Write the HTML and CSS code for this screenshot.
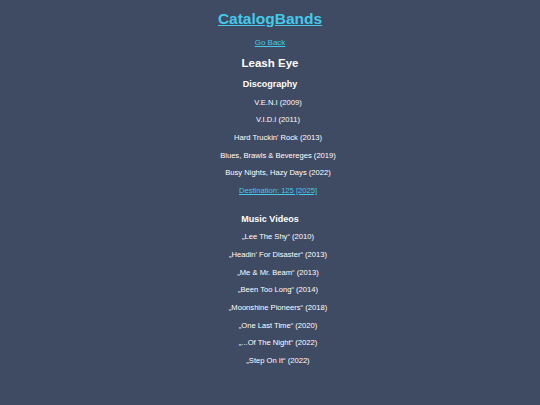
FILE: index.html
```html
<!DOCTYPE html>
<html lang="en">
<head>
  <meta charset="UTF-8">
  <title>CatalogBands - Leash Eye</title>
  <link rel="stylesheet" href="styles.css">
</head>
<body>
  <header class="site-header">
    <h1><a href="#">CatalogBands</a></h1>
    <a class="back-link" href="#">Go Back</a>
  </header>

  <main class="band">
    <h2 class="band-name">Leash Eye</h2>

    <section class="group">
      <h3>Discography</h3>
      <ul class="items">
        <li>V.E.N.I (2009)</li>
        <li>V.I.D.I (2011)</li>
        <li>Hard Truckin' Rock (2013)</li>
        <li>Blues, Brawls &amp; Bevereges (2019)</li>
        <li>Busy Nights, Hazy Days (2022)</li>
        <li><a href="#">Destination: 125 [2025]</a></li>
      </ul>
    </section>

    <section class="group">
      <h3>Music Videos</h3>
      <ul class="items">
        <li>„Lee The Shy“ (2010)</li>
        <li>„Headin' For Disaster“ (2013)</li>
        <li>„Me &amp; Mr. Beam“ (2013)</li>
        <li>„Been Too Long“ (2014)</li>
        <li>„Moonshine Pioneers“ (2018)</li>
        <li>„One Last Time“ (2020)</li>
        <li>„...Of The Night“ (2022)</li>
        <li>„Step On It“ (2022)</li>
      </ul>
    </section>
  </main>
</body>
</html>
```

FILE: styles.css
```css
body {
  margin: 0;
  padding: 10px 0;
  background-color: #3f4a63;
  color: #ffffff;
  font-family: "Liberation Sans", Arial, sans-serif;
  text-align: center;
}

a {
  color: #45c9ea;
}

.site-header h1 {
  font-size: 15.5px;
  margin: 0 0 3px;
}

.back-link {
  font-size: 8px;
}

.band {
  display: flex;
  flex-direction: column;
}

.band-name {
  font-size: 11.5px;
  margin: 8px 0 0;
}

.group h3 {
  font-size: 9px;
  margin: 10px 0 8.5px;
}

.items {
  list-style: none;
  margin: 0;
  padding: 0 0 0 16px;
}

.items li {
  font-size: 7.6px;
  line-height: 9px;
  margin-bottom: 8.7px;
}
```
